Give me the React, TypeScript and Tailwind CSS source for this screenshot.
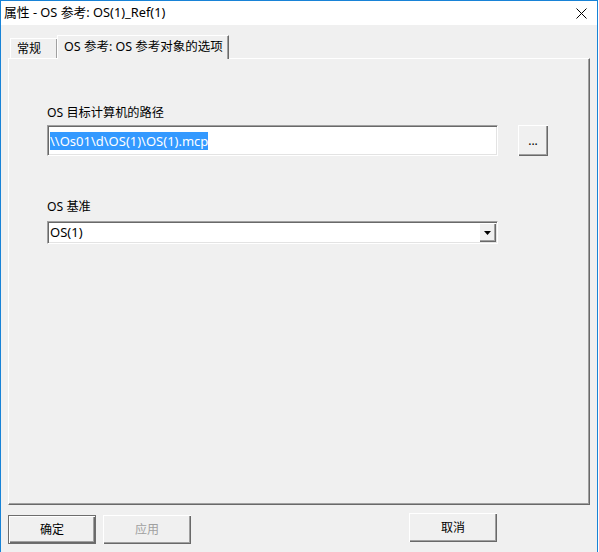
const font = {
  fontFamily: '"Noto Sans", "Noto Sans CJK SC", sans-serif',
};

function RaisedButton({
  label,
  isDefault,
  disabled,
  className,
}: {
  label: string;
  isDefault?: boolean;
  disabled?: boolean;
  className?: string;
}) {
  return (
    <div
      className={`flex items-center justify-center bg-[#f0f0f0] text-[12px] ${
        isDefault
          ? "border border-[#6d6d6d] shadow-[inset_1px_1px_0_#ffffff,inset_-1px_-1px_0_#696969,inset_-2px_-2px_0_#a0a0a0]"
          : "shadow-[inset_1px_1px_0_#ffffff,inset_-1px_-1px_0_#696969,inset_-2px_-2px_0_#a0a0a0]"
      } ${disabled ? "text-[#a0a0a0]" : "text-black"} ${className ?? ""}`}
    >
      {label}
    </div>
  );
}

function Sunken({
  className,
  children,
}: {
  className?: string;
  children?: React.ReactNode;
}) {
  return (
    <div
      className={`border-t border-l border-[#a0a0a0] border-r border-b border-r-white border-b-white bg-white shadow-[inset_1px_1px_0_#696969,inset_-1px_-1px_0_#e3e3e3] ${
        className ?? ""
      }`}
    >
      {children}
    </div>
  );
}

export default function App() {
  return (
    <div
      className="h-[552px] w-[598px] overflow-hidden border-x border-t border-[#1883d7] bg-[#f0f0f0] text-black"
      style={font}
    >
      {/* title bar */}
      <div className="flex h-[24px] items-center justify-between bg-white pl-[3px] pr-[10px]">
        <span className="text-[12.8px]">属性 - OS 参考: OS(1)_Ref(1)</span>
        <svg width="11" height="11" viewBox="0 0 11 11">
          <path d="M0.5 0.5 L10.5 10.5 M10.5 0.5 L0.5 10.5" stroke="#000" strokeWidth="1" />
        </svg>
      </div>

      <div className="px-[7px] pt-[10px]">
        {/* tabs */}
        <div className="flex h-[23px] items-end pl-[2px]">
          <div className="flex h-[20px] w-[47px] items-center border-l border-t border-white pl-[6px] text-[12px] shadow-[inset_-1px_0_0_#a0a0a0]">
            常规
          </div>
          <div className="relative z-10 -mb-px flex h-[24px] w-[172px] items-center border-l border-t border-white pl-[6px] text-[12.5px] bg-[#f0f0f0] border-r border-r-[#696969] shadow-[inset_-1px_0_0_#a0a0a0]">
            OS 参考: OS 参考对象的选项
          </div>
        </div>

        {/* panel */}
        <div className="h-[447px] border-l border-t border-white border-r border-b border-r-[#696969] border-b-[#696969] pl-[38px] pt-[46px] shadow-[inset_-1px_-1px_0_#a0a0a0]">
          <div className="text-[12.2px] leading-[16px]">OS 目标计算机的路径</div>
          <div className="mt-[4px] flex">
            <Sunken className="h-[31px] w-[451px] pl-[2px] pt-[2px]">
              <span className="bg-[#3399ff] text-[13px] leading-[17px] text-white">
                \\Os01\d\OS(1)\OS(1).mcp
              </span>
            </Sunken>
            <RaisedButton label="..." className="ml-[20px] h-[31px] w-[30px]" />
          </div>

          <div className="mt-[43px] text-[12.2px] leading-[16px]">OS 基准</div>
          <Sunken className="mt-[6px] flex h-[23px] w-[451px] items-center justify-between">
            <span className="pl-[2px] text-[13px]">OS(1)</span>
            <div className="mr-[1px] flex h-[19px] w-[17px] items-center justify-center bg-[#f0f0f0] shadow-[inset_1px_1px_0_#ffffff,inset_-1px_-1px_0_#696969,inset_-2px_-2px_0_#a0a0a0]">
              <svg width="7" height="4" viewBox="0 0 7 4">
                <path d="M0 0 H7 L3.5 4 Z" fill="#000" />
              </svg>
            </div>
          </Sunken>
        </div>

        {/* bottom buttons */}
        <div className="mt-[8px] flex items-start">
          <RaisedButton label="确定" isDefault className="mt-[2px] h-[29px] w-[88px]" />
          <RaisedButton label="应用" disabled className="ml-[7px] mt-[2px] h-[29px] w-[88px]" />
          <RaisedButton label="取消" className="ml-[218px] h-[29px] w-[88px]" />
        </div>
      </div>
    </div>
  );
}
